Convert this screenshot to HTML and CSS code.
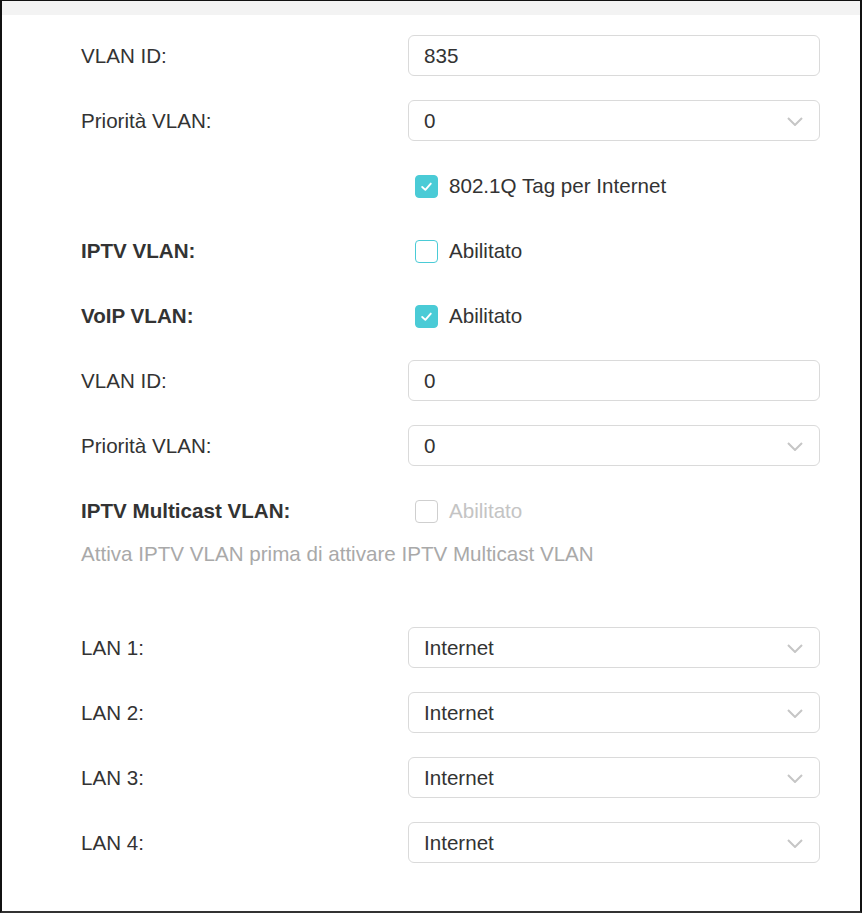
FILE: index.html
```html
<!DOCTYPE html>
<html lang="it">
<head>
<meta charset="utf-8">
<title>VLAN</title>
<link rel="stylesheet" href="styles.css">
</head>
<body>
<div class="frame">
  <div class="topbar"></div>
  <div class="form">
    <div class="row">
      <div class="label">VLAN ID:</div>
      <div class="field">835</div>
    </div>
    <div class="row">
      <div class="label">Priorità VLAN:</div>
      <div class="field select">0<svg class="chev" viewBox="0 0 16 9"><polyline points="1,1 8,8 15,1"/></svg></div>
    </div>
    <div class="row">
      <div class="label"></div>
      <div class="check"><span class="box on"><svg viewBox="0 0 22 22"><polyline points="6.5,11.5 9.8,14.5 15.5,8"/></svg></span>802.1Q Tag per Internet</div>
    </div>
    <div class="row">
      <div class="label bold">IPTV VLAN:</div>
      <div class="check"><span class="box"></span>Abilitato</div>
    </div>
    <div class="row">
      <div class="label bold">VoIP VLAN:</div>
      <div class="check"><span class="box on"><svg viewBox="0 0 22 22"><polyline points="6.5,11.5 9.8,14.5 15.5,8"/></svg></span>Abilitato</div>
    </div>
    <div class="row">
      <div class="label">VLAN ID:</div>
      <div class="field">0</div>
    </div>
    <div class="row">
      <div class="label">Priorità VLAN:</div>
      <div class="field select">0<svg class="chev" viewBox="0 0 16 9"><polyline points="1,1 8,8 15,1"/></svg></div>
    </div>
    <div class="row">
      <div class="label bold">IPTV Multicast VLAN:</div>
      <div class="check disabled"><span class="box"></span>Abilitato</div>
    </div>
    <div class="hint">Attiva IPTV VLAN prima di attivare IPTV Multicast VLAN</div>
    <div class="lan">
      <div class="row">
        <div class="label">LAN 1:</div>
        <div class="field select">Internet<svg class="chev" viewBox="0 0 16 9"><polyline points="1,1 8,8 15,1"/></svg></div>
      </div>
      <div class="row">
        <div class="label">LAN 2:</div>
        <div class="field select">Internet<svg class="chev" viewBox="0 0 16 9"><polyline points="1,1 8,8 15,1"/></svg></div>
      </div>
      <div class="row">
        <div class="label">LAN 3:</div>
        <div class="field select">Internet<svg class="chev" viewBox="0 0 16 9"><polyline points="1,1 8,8 15,1"/></svg></div>
      </div>
      <div class="row">
        <div class="label">LAN 4:</div>
        <div class="field select">Internet<svg class="chev" viewBox="0 0 16 9"><polyline points="1,1 8,8 15,1"/></svg></div>
      </div>
    </div>
  </div>
</div>
</body>
</html>
```
FILE: styles.css
```css
html, body {
  margin: 0;
  padding: 0;
  background: #ffffff;
}
body {
  font-family: "Liberation Sans", Arial, sans-serif;
  font-size: 20.6px;
  color: #333333;
}
.frame {
  box-sizing: border-box;
  width: 862px;
  height: 913px;
  border-left: 2px solid #111;
  border-top: 1px solid #111;
  border-right: 2px solid #111;
  border-bottom: 2px solid #333;
  background: #fff;
  overflow: hidden;
}
.topbar {
  height: 14px;
  background: #f3f3f3;
}
.form {
  padding: 20px 0 0 79px;
}
.row {
  display: flex;
  align-items: center;
  height: 41px;
  margin-bottom: 24px;
  padding-top: 1px;
  box-sizing: border-box;
}
.label {
  width: 327px;
  flex: none;
}
.bold {
  font-weight: bold;
}
.field {
  box-sizing: border-box;
  position: relative;
  width: 412px;
  height: 41px;
  margin-top: -1px;
  border: 1px solid #dadada;
  border-radius: 6px;
  padding-left: 15px;
  padding-top: 1px;
  display: flex;
  align-items: center;
  color: #333;
}
.chev {
  position: absolute;
  right: 16px;
  top: 16px;
  width: 16px;
  height: 9px;
}
.chev polyline {
  fill: none;
  stroke: #c6c6c6;
  stroke-width: 2;
}
.check {
  display: flex;
  align-items: center;
  padding-left: 7px;
  color: #333;
}
.box {
  box-sizing: border-box;
  width: 23px;
  height: 23px;
  border: 1px solid #4acbd6;
  border-radius: 4px;
  margin-right: 11px;
  display: flex;
}
.box.on {
  background: #4acbd6;
}
.box svg {
  width: 100%;
  height: 100%;
}
.box polyline {
  fill: none;
  stroke: #fff;
  stroke-width: 2;
  stroke-linecap: round;
  stroke-linejoin: round;
}
.check.disabled {
  color: #c4c4c4;
}
.check.disabled .box {
  border-color: #cfcfcf;
}
.hint {
  margin-top: -13px;
  color: #a9a9a9;
  line-height: 23px;
}
.lan {
  margin-top: 62px;
}
```
